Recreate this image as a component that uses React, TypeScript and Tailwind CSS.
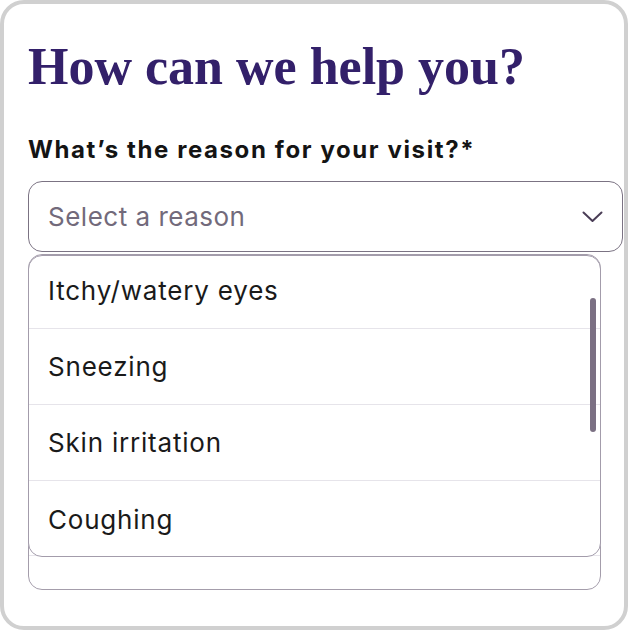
import React from "react";

const REASONS = ["Itchy/watery eyes", "Sneezing", "Skin irritation", "Coughing"];

function Chevron() {
  return (
    <svg width="21" height="12" viewBox="0 0 21 12" fill="none">
      <path d="M1.5 1.5 L10.5 10 L19.5 1.5" stroke="#4a3d56" strokeWidth="2" strokeLinecap="round" strokeLinejoin="round" />
    </svg>
  );
}

export default function App() {
  return (
    <div className="w-[628px] h-[630px] bg-white font-['Inter',sans-serif]">
      <div className="relative h-full overflow-hidden rounded-[24px] border-4 border-[#d0d0d0] bg-white pl-6 pt-[37px]">
        {/* Heading */}
        <h1 className="font-['Liberation_Serif',serif] text-[52px] font-bold leading-none text-[#33206a]">
          How can we help you?
        </h1>

        <label className="mt-[43px] block text-[24px] font-bold leading-[28px] tracking-[1.6px] text-[#141414]">
          What’s the reason for your visit?*
        </label>

        {/* Select trigger */}
        <div className="mt-[17px] flex h-[71px] w-[595px] items-center justify-between rounded-[14px] border border-[#7b7383] pl-[19px] pr-[19px]">
          <span className="text-[26px] tracking-[0.5px] text-[#726a7b]">Select a reason</span>
          <Chevron />
        </div>

        {/* Field underneath the open menu */}
        <div className="mt-[2px] h-[336px] w-[573px] rounded-[14px] border border-[#a49dab]">
          <div className="h-[301px] border-b border-[#e6e4ea]" />
        </div>

        {/* Open menu */}
        <div className="absolute left-6 top-[251px] h-[302px] w-[573px] overflow-hidden rounded-[14px] border border-[#a39cab] bg-white">
          <div className="-mt-[3px]">
            {REASONS.map((r, i) => (
              <div
                key={r}
                className={
                  "flex h-[76px] items-center pl-[19px] text-[26px] tracking-[0.8px] text-[#1a1a1a] " +
                  (i < REASONS.length - 1 ? "border-b border-[#e6e4ea]" : "")
                }
              >
                {r}
              </div>
            ))}
          </div>
          <div className="absolute right-[4px] top-[42px] h-[134px] w-[6px] rounded-full bg-[#7b7083]" />
        </div>
      </div>
    </div>
  );
}
